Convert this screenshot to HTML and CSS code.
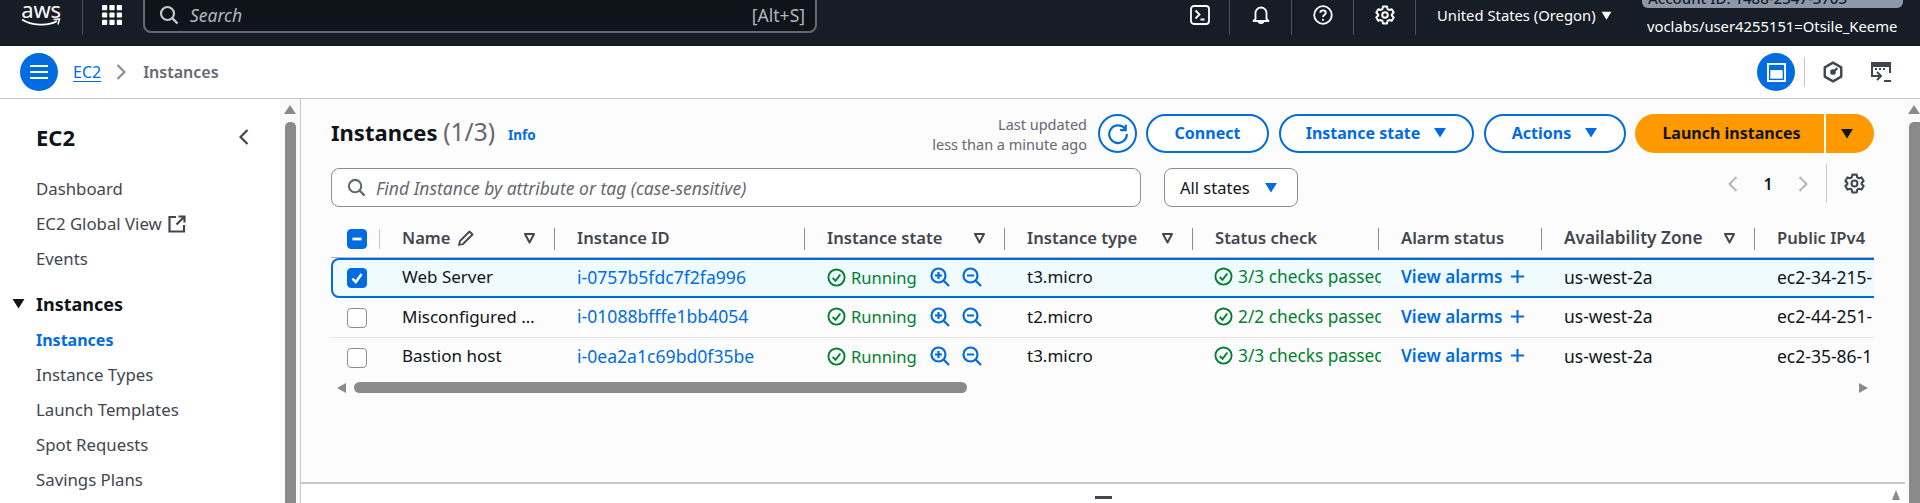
FILE: index.html
```html
<!DOCTYPE html>
<html lang="en">
<head>
<meta charset="utf-8">
<title>Instances | EC2</title>
<link rel="stylesheet" href="styles.css">
</head>
<body>
<svg class="defs" aria-hidden="true">
  <symbol id="i-search" viewBox="0 0 20 20"><circle cx="8.5" cy="8.5" r="6.5" fill="none" stroke="currentColor" stroke-width="2.2"/><path d="M13.2 13.2 18.5 18.5" stroke="currentColor" stroke-width="2.4" fill="none"/></symbol>
  <symbol id="i-gear" viewBox="0 0 20 20"><path d="M8 1.500h4l.6 2.600 1.600.9 2.500-.8 2 3.400-1.900 1.800v1.200l1.900 1.800-2 3.400-2.500-.8-1.600.9-.6 2.600H8l-.6-2.600-1.600-.9-2.500.8-2-3.400 1.900-1.800V9.400L1.300 7.600l2-3.400 2.500.8 1.600-.9z" fill="none" stroke="currentColor" stroke-width="2" stroke-linejoin="round"/><circle cx="10" cy="10" r="2.800" fill="none" stroke="currentColor" stroke-width="2"/></symbol>
  <symbol id="i-check" viewBox="0 0 20 20"><circle cx="10" cy="10" r="8.500" fill="none" stroke="currentColor" stroke-width="2"/><path d="M6 10.500 9 13.500 14 6.800" fill="none" stroke="currentColor" stroke-width="2"/></symbol>
  <symbol id="i-zoomin" viewBox="0 0 20 20"><circle cx="8.500" cy="8.500" r="7" fill="none" stroke="currentColor" stroke-width="2.200"/><path d="M13.500 13.500 19 19M8.500 5v7M5 8.500h7" fill="none" stroke="currentColor" stroke-width="2.200"/></symbol>
  <symbol id="i-zoomout" viewBox="0 0 20 20"><circle cx="8.500" cy="8.500" r="7" fill="none" stroke="currentColor" stroke-width="2.200"/><path d="M13.500 13.500 19 19M5 8.500h7" fill="none" stroke="currentColor" stroke-width="2.200"/></symbol>
  <symbol id="i-filter" viewBox="0 0 12 12"><path d="M1.500 2h9L6 10.500z" fill="none" stroke="currentColor" stroke-width="2" stroke-linejoin="round"/></symbol>
  <symbol id="i-caret" viewBox="0 0 14 12"><path d="M0.500 1h13L7 11.500z" fill="currentColor"/></symbol>
  <symbol id="i-plus" viewBox="0 0 16 16"><path d="M8 1v14M1 8h14" fill="none" stroke="currentColor" stroke-width="2.200"/></symbol>
</svg>

<header class="topbar">
  <div class="aws-logo">
    <span class="aws-word">aws</span>
    <svg class="aws-smile" viewBox="0 0 40 9"><path d="M1 1.500C10 7.500 27 8.500 36 3" fill="none" stroke="#fff" stroke-width="1.800"/><path d="M32.500 1.500 38.500 1 37 6.500" fill="none" stroke="#fff" stroke-width="1.500"/></svg>
  </div>
  <span class="top-div"></span>
  <svg class="apps" viewBox="0 0 20 20" fill="#fff"><rect x="0" y="0" width="5.200" height="5.200" rx=".8"/><rect x="7.400" y="0" width="5.200" height="5.200" rx=".8"/><rect x="14.800" y="0" width="5.200" height="5.200" rx=".8"/><rect x="0" y="7.400" width="5.200" height="5.200" rx=".8"/><rect x="7.400" y="7.400" width="5.200" height="5.200" rx=".8"/><rect x="14.800" y="7.400" width="5.200" height="5.200" rx=".8"/><rect x="0" y="14.800" width="5.200" height="5.200" rx=".8"/><rect x="7.400" y="14.800" width="5.200" height="5.200" rx=".8"/><rect x="14.800" y="14.800" width="5.200" height="5.200" rx=".8"/></svg>
  <div class="global-search">
    <svg class="gs-icon"><use href="#i-search"/></svg>
    <span class="gs-text">Search</span>
    <span class="gs-key">[Alt+S]</span>
  </div>
  <div class="top-tools">
    <span class="tool"><svg class="tool-icon" viewBox="0 0 20 20"><rect x="1" y="1" width="18" height="18" rx="3" fill="none" stroke="#fff" stroke-width="1.800"/><path d="M5.500 5.500 9.500 9.500 5.500 13.500M10.500 14.500h4" fill="none" stroke="#fff" stroke-width="1.800"/></svg></span>
    <span class="tool"><svg class="tool-icon" viewBox="0 0 20 20"><path d="M4.500 14V8a5.500 5.500 0 0 1 11 0v6l2 2h-15zM7.500 16.500c.4 2 4.600 2 5 0" fill="none" stroke="#fff" stroke-width="1.800" stroke-linejoin="round"/></svg></span>
    <span class="tool"><svg class="tool-icon" viewBox="0 0 20 20"><circle cx="10" cy="10" r="8.800" fill="none" stroke="#fff" stroke-width="1.800"/><path d="M7.300 7.700C7.300 4.500 12.800 4.500 12.800 7.700 12.800 9.700 10 9.700 10 12" fill="none" stroke="#fff" stroke-width="1.800"/><circle cx="10" cy="14.800" r="1.100" fill="#fff"/></svg></span>
    <span class="tool tool-last"><svg class="tool-icon"><use href="#i-gear"/></svg></span>
  </div>
  <div class="region">United States (Oregon) <svg class="region-caret"><use href="#i-caret"/></svg></div>
  <div class="account">
    <div class="account-pill"><span>Account ID: 1488-2347-3703</span></div>
    <div class="account-user">voclabs/user4255151=Otsile_Keeme</div>
  </div>
</header>

<nav class="crumbbar">
  <button class="round-btn" aria-label="Menu"><svg class="burger" viewBox="0 0 20 16"><path d="M1 2h18M1 8h18M1 14h18" stroke="#fff" stroke-width="2.200"/></svg></button>
  <a class="crumb-link">EC2</a>
  <svg class="crumb-sep" viewBox="0 0 10 16"><path d="M1.500 1 8.500 8 1.500 15" fill="none" stroke="#8c8c94" stroke-width="2.200"/></svg>
  <span class="crumb-current">Instances</span>
  <div class="crumb-tools">
    <button class="round-btn" aria-label="Panel"><svg class="panel-icon" viewBox="0 0 20 20"><rect x="1" y="1" width="18" height="18" fill="none" stroke="#fff" stroke-width="2"/><rect x="3.500" y="7.500" width="13" height="9" fill="#fff"/></svg></button>
    <span class="crumb-div"></span>
    <svg class="crumb-icon" viewBox="0 0 20 20"><path d="M10 1.500 17.500 5.800v8.400L10 18.500 2.500 14.200V5.800z" fill="none" stroke="#424650" stroke-width="2.200" stroke-linejoin="round"/><circle cx="10" cy="10" r="2.600" fill="#424650"/><path d="M10 10 14 6.500" stroke="#424650" stroke-width="2"/></svg>
    <svg class="crumb-icon crumb-icon-last" viewBox="0 0 22 22"><path d="M7 15H2V2h18v10" fill="none" stroke="#424650" stroke-width="2"/><path d="M2 3h18v3H2z" fill="#424650"/><path d="M5 8h2M9 8h2M13 8h2" stroke="#424650" stroke-width="2"/><path d="M7 11l4 4-4 4M5 15h5M14 20h7" fill="none" stroke="#424650" stroke-width="2"/></svg>
  </div>
</nav>

<div class="shell">
  <aside class="sidebar">
    <div class="side-nav">
      <div class="side-head"><span class="side-title">EC2</span><svg class="side-collapse" viewBox="0 0 10 16"><path d="M8.500 1 1.500 8 8.500 15" fill="none" stroke="#424650" stroke-width="2.200"/></svg></div>
      <a class="side-item">Dashboard</a>
      <a class="side-item">EC2 Global View <svg class="ext" viewBox="0 0 18 18"><path d="M8 2H1.500v14.500H16V10M10.500 1.500H16.500V7.500M16 2 8.500 9.500" fill="none" stroke="#424650" stroke-width="2.200"/></svg></a>
      <a class="side-item">Events</a>
      <div class="side-group"><svg class="side-caret"><use href="#i-caret"/></svg>Instances</div>
      <a class="side-item side-active">Instances</a>
      <a class="side-item">Instance Types</a>
      <a class="side-item">Launch Templates</a>
      <a class="side-item">Spot Requests</a>
      <a class="side-item">Savings Plans</a>
    </div>
    <div class="vscroll"><span class="arrow-up"></span><span class="vthumb"></span></div>
  </aside>

  <main class="main">
    <div class="content">
      <section class="head-row">
        <h1 class="title">Instances <span class="count">(1/3)</span></h1>
        <a class="info">Info</a>
        <div class="updated"><span>Last updated</span><span>less than a minute ago</span></div>
        <button class="refresh" aria-label="Refresh"><svg class="refresh-icon" viewBox="0 0 20 20"><path d="M16.500 5.500A8 8 0 1 0 18 10" fill="none" stroke="#006ce0" stroke-width="2"/><path d="M12 6.500h5v-5" fill="none" stroke="#006ce0" stroke-width="2"/></svg></button>
        <button class="btn btn-connect">Connect</button>
        <button class="btn btn-state">Instance state <svg class="caret"><use href="#i-caret"/></svg></button>
        <button class="btn btn-actions">Actions <svg class="caret"><use href="#i-caret"/></svg></button>
        <div class="launch"><button class="launch-main">Launch instances</button><button class="launch-drop" aria-label="More"><svg class="caret"><use href="#i-caret"/></svg></button></div>
      </section>

      <section class="filter-row">
        <div class="find"><svg class="find-icon"><use href="#i-search"/></svg><span>Find Instance by attribute or tag (case-sensitive)</span></div>
        <div class="states">All states <svg class="caret"><use href="#i-caret"/></svg></div>
        <div class="pager">
          <svg class="pg-arrow" viewBox="0 0 10 16"><path d="M8.500 1 1.500 8 8.500 15" fill="none" stroke="#b4b4bb" stroke-width="2"/></svg>
          <span class="pg-num">1</span>
          <svg class="pg-arrow" viewBox="0 0 10 16"><path d="M1.500 1 8.500 8 1.500 15" fill="none" stroke="#b4b4bb" stroke-width="2"/></svg>
          <span class="pg-div"></span>
          <svg class="pg-gear"><use href="#i-gear"/></svg>
        </div>
      </section>

      <section class="table">
        <div class="row row-head">
          <div class="cell cell-check"><span class="box box-on"><svg class="box-mark" viewBox="0 0 14 14"><path d="M3 7h8" stroke="#fff" stroke-width="2.400"/></svg></span><span class="first-div"></span></div>
          <div class="cell th">Name <svg class="pencil" viewBox="0 0 18 18"><path d="M3 12 12.500 2.500l3 3L6 15l-4 1z" fill="none" stroke="#424650" stroke-width="1.800" stroke-linejoin="round"/></svg><svg class="filter"><use href="#i-filter"/></svg></div>
          <div class="cell th">Instance ID</div>
          <div class="cell th">Instance state<svg class="filter"><use href="#i-filter"/></svg></div>
          <div class="cell th">Instance type<svg class="filter"><use href="#i-filter"/></svg></div>
          <div class="cell th">Status check</div>
          <div class="cell th">Alarm status</div>
          <div class="cell th th-wide">Availability Zone<svg class="filter"><use href="#i-filter"/></svg></div>
          <div class="cell th th-last">Public IPv4</div>
        </div>

        <div class="row row-selected">
          <div class="cell cell-check"><span class="box box-on"><svg class="box-mark" viewBox="0 0 14 14"><path d="M3 7.500 6 10.500 11 3.500" fill="none" stroke="#fff" stroke-width="2.200"/></svg></span></div>
          <div class="cell">Web Server</div>
          <div class="cell"><a class="id-link">i-0757b5fdc7f2fa996</a></div>
          <div class="cell state"><svg class="ok"><use href="#i-check"/></svg><span class="ok-text">Running</span><svg class="zoomi"><use href="#i-zoomin"/></svg><svg class="zoomi"><use href="#i-zoomout"/></svg></div>
          <div class="cell">t3.micro</div>
          <div class="cell status"><svg class="ok"><use href="#i-check"/></svg><span class="ok-text">3/3 checks passed</span></div>
          <div class="cell"><a class="alarm">View alarms</a><svg class="plus"><use href="#i-plus"/></svg></div>
          <div class="cell zone">us-west-2a</div>
          <div class="cell dns">ec2-34-215-</div>
        </div>

        <div class="row row-line">
          <div class="cell cell-check"><span class="box"></span></div>
          <div class="cell">Misconfigured …</div>
          <div class="cell"><a class="id-link">i-01088bfffe1bb4054</a></div>
          <div class="cell state"><svg class="ok"><use href="#i-check"/></svg><span class="ok-text">Running</span><svg class="zoomi"><use href="#i-zoomin"/></svg><svg class="zoomi"><use href="#i-zoomout"/></svg></div>
          <div class="cell">t2.micro</div>
          <div class="cell status"><svg class="ok"><use href="#i-check"/></svg><span class="ok-text">2/2 checks passed</span></div>
          <div class="cell"><a class="alarm">View alarms</a><svg class="plus"><use href="#i-plus"/></svg></div>
          <div class="cell zone">us-west-2a</div>
          <div class="cell dns">ec2-44-251-</div>
        </div>

        <div class="row row-last">
          <div class="cell cell-check"><span class="box"></span></div>
          <div class="cell">Bastion host</div>
          <div class="cell"><a class="id-link">i-0ea2a1c69bd0f35be</a></div>
          <div class="cell state"><svg class="ok"><use href="#i-check"/></svg><span class="ok-text">Running</span><svg class="zoomi"><use href="#i-zoomin"/></svg><svg class="zoomi"><use href="#i-zoomout"/></svg></div>
          <div class="cell">t3.micro</div>
          <div class="cell status"><svg class="ok"><use href="#i-check"/></svg><span class="ok-text">3/3 checks passed</span></div>
          <div class="cell"><a class="alarm">View alarms</a><svg class="plus"><use href="#i-plus"/></svg></div>
          <div class="cell zone">us-west-2a</div>
          <div class="cell dns">ec2-35-86-1</div>
        </div>
      </section>

      <div class="hscroll"><span class="arrow-left"></span><span class="hthumb"></span><span class="arrow-right"></span></div>
    </div>
    <div class="split-panel"><span class="handle"></span><span class="split-arrow"></span></div>
  </main>

  <div class="page-scroll"><span class="arrow-up"></span><span class="vthumb"></span></div>
</div>
</body>
</html>
```

FILE: styles.css
```css
* { box-sizing: border-box; }
html, body { margin: 0; height: 503px; overflow: hidden; }
body { font-family: "Noto Sans", sans-serif; font-size: 16px; color: #0f141a; background: #fff; }
.defs { position: absolute; width: 0; height: 0; }
button { font: inherit; cursor: pointer; }

/* top bar */
.topbar { height: 46px; background: #161d26; color: #fff; display: flex; align-items: flex-start; overflow: hidden; }
.aws-logo { width: 40px; margin-left: 21px; display: flex; flex-direction: column; align-items: center; }
.aws-word { font-size: 22px; line-height: 18px; letter-spacing: -.3px; }
.aws-smile { width: 40px; height: 9px; }
.top-div { width: 1px; height: 35px; background: #4b525c; margin-left: 21px; }
.apps { width: 20px; height: 20px; margin: 5px 0 0 19px; }
.global-search { width: 674px; height: 43px; margin: -10px 0 0 21px; background: #0f141a; border: 2px solid #656871; border-radius: 8px; display: flex; align-items: center; padding: 6px 10px 0 14px; font-size: 17.500px; color: #b4b4bb; }
.gs-icon { width: 20px; height: 20px; color: #c6c6cd; }
.gs-text { font-style: italic; margin-left: 11px; }
.gs-key { margin-left: auto; }
.top-tools { display: flex; margin-left: 373px; }
.tool { width: 62px; height: 35px; display: flex; justify-content: center; padding-top: 5px; border-right: 1px solid #4b525c; }
.tool:first-child { width: 40px; justify-content: flex-start; }
.tool-icon { width: 20px; height: 20px; color: #fff; }
.region { margin-left: 21px; margin-top: 4px; font-size: 14.800px; line-height: 22px; white-space: nowrap; display: flex; align-items: center; }
.region-caret { width: 11px; height: 9px; margin-left: 5px; color: #fff; }
.account { margin-left: auto; margin-right: 17px; width: 261px; }
.account-pill { height: 24px; margin-top: -16px; background: #8d99a8; border-radius: 6px; color: #161d26; font-size: 15px; line-height: 28px; padding-left: 6px; white-space: nowrap; font-weight: 500; }
.account-user { font-size: 14.800px; line-height: 22px; margin-top: 7px; padding-left: 5px; white-space: nowrap; }

/* breadcrumbs */
.crumbbar { height: 53px; background: #fff; border-bottom: 1px solid #c6c6cd; display: flex; align-items: center; padding: 0 0 0 20px; }
.round-btn { width: 38px; height: 38px; padding: 0; border: 0; border-radius: 50%; background: #006ce0; display: flex; align-items: center; justify-content: center; }
.burger { width: 20px; height: 16px; }
.crumb-link { margin-left: 15px; color: #006ce0; text-decoration: underline; text-underline-offset: 3px; font-size: 16px; }
.crumb-sep { width: 10px; height: 16px; margin-left: 15px; }
.crumb-current { margin-left: 17px; color: #656871; font-size: 16px; font-weight: 600; }
.crumb-tools { margin-left: auto; display: flex; align-items: center; }
.panel-icon { width: 19px; height: 19px; }
.crumb-div { width: 1px; height: 30px; background: #c6c6cd; margin: 0 17px 0 9px; }
.crumb-icon { width: 22px; height: 22px; }
.crumb-icon-last { margin: 0 28px 0 26px; }

/* layout */
.shell { display: flex; height: 404px; }

/* sidebar */
.sidebar { width: 301px; flex: none; background: #fff; border-right: 1px solid #c6c6cd; display: flex; }
.side-nav { width: 280px; padding-top: 23px; flex: none; }
.side-head { height: 30px; display: flex; align-items: center; justify-content: space-between; padding: 0 31px 0 36px; margin-bottom: 19px; }
.side-title { font-size: 22px; font-weight: 700; line-height: 30px; }
.side-collapse { width: 10px; height: 16px; }
.side-item { height: 35px; padding-left: 36px; display: flex; align-items: center; color: #424650; font-size: 16.800px; white-space: nowrap; }
.ext { width: 18px; height: 18px; margin-left: 6px; }
.side-group { height: 35px; margin: 10px 0 1px; padding-left: 12px; display: flex; align-items: center; font-weight: 700; font-size: 18px; }
.side-caret { width: 13px; height: 11px; margin-right: 11px; }
.side-active { color: #006ce0; font-weight: 700; font-size: 16px; }
.vscroll { width: 20px; flex: none; background: #fafafa; display: flex; flex-direction: column; align-items: center; padding-top: 6px; }
.arrow-up { width: 0; height: 0; border: 6px solid transparent; border-top: 0; border-bottom: 9px solid #8a8a8a; flex: none; }
.vthumb { flex: 1; width: 11px; background: #8a8a8a; border-radius: 5px 5px 0 0; margin-top: 8px; }

/* main */
.main { flex: 1; min-width: 0; display: flex; flex-direction: column; background: #fcfcfc; }
.content { flex: 1; padding: 15px 0 0 30px; width: 1573px; }
.head-row { display: flex; align-items: center; height: 39px; }
.title { margin: 0 0 3px; font-size: 22px; font-weight: 700; line-height: 30px; white-space: nowrap; }
.count { font-weight: 400; color: #656871; font-size: 24.500px; }
.info { margin-left: 13px; color: #006ce0; font-size: 13.500px; font-weight: 700; padding-top: 3px; }
.updated { margin-left: auto; display: flex; flex-direction: column; align-items: flex-end; font-size: 14.500px; line-height: 20px; color: #656871; }
.refresh { width: 39px; height: 39px; padding: 0; margin-left: 11px; border: 2px solid #006ce0; border-radius: 50%; background: #fff; display: flex; align-items: center; justify-content: center; }
.refresh-icon { width: 22px; height: 22px; }
.btn { height: 39px; padding: 0 0 2px; margin-left: 10px; background: #fff; border: 2px solid #006ce0; border-radius: 20px; color: #006ce0; font-weight: 700; font-size: 16px; display: flex; align-items: center; justify-content: center; white-space: nowrap; }
.btn-connect { width: 123px; margin-left: 9px; }
.btn-state { width: 195px; }
.btn-actions { width: 142px; }
.caret { width: 14px; height: 11px; margin-left: 13px; color: #006ce0; }
.launch { display: flex; margin-left: 9px; height: 39px; }
.launch-main { width: 189px; border: 0; padding: 0 0 2px 4px; background: #ff9900; border-radius: 20px 0 0 20px; font-weight: 700; color: #0f141a; font-size: 16px; }
.launch-drop { width: 48px; margin-left: 2px; border: 0; padding: 0 6px 0 0; background: #ff9900; border-radius: 0 20px 20px 0; display: flex; align-items: center; justify-content: center; }
.launch-drop .caret { color: #0f141a; margin-left: 0; }

.filter-row { display: flex; margin-top: 15px; height: 39px; width: 1543px; }
.find { width: 810px; height: 39px; border: 1px solid #8c8c94; border-radius: 8px; background: #fff; display: flex; align-items: center; padding-left: 15px; font-style: italic; color: #656871; font-size: 17.500px; }
.find-icon { width: 19px; height: 19px; margin-right: 10px; color: #656871; flex: none; }
.states { width: 134px; height: 39px; margin-left: 23px; border: 1px solid #8c8c94; border-radius: 8px; background: #fff; display: flex; align-items: center; padding-left: 15px; font-size: 16.500px; }
.states .caret { margin-left: 14px; }
.pager { margin-left: auto; margin-top: -4px; height: 39px; display: flex; align-items: center; }
.pg-arrow { width: 10px; height: 18px; }
.pg-num { width: 60px; text-align: center; font-weight: 600; font-size: 16px; }
.pg-div { width: 1px; height: 39px; background: #c6c6cd; margin-left: 18px; }
.pg-gear { width: 21px; height: 21px; margin: 0 9px 0 17px; color: #424650; }

/* table */
.table { width: 1543px; margin-top: 13px; overflow: hidden; font-size: 17px; }
.row { display: grid; grid-template-columns: 49px 175px 250px 200px 188px 186px 163px 213px 200px; width: 1624px; height: 39px; align-items: center; }
.row-head { height: 38px; border-bottom: 1px solid #b4b4bb; }
.row-selected { background: #f0fbff; box-shadow: inset 0 0 0 2px #006ce0; border-radius: 8px 0 0 8px; height: 40px; }
.row-line { height: 40px; border-bottom: 1px solid #e8e8ea; }
.cell { padding: 0 0 3px 22px; white-space: nowrap; overflow: hidden; display: flex; align-items: center; height: 100%; }
.row-last .cell { padding-bottom: 4px; }
.cell.state { padding-bottom: 2px; }
.row-last .cell.state { padding-bottom: 3px; }
.cell.cell-check { padding: 0 0 0 16px; overflow: visible; }
.first-div { width: 1px; height: 20px; background: #c6c6cd; margin-left: 12px; }
.box { width: 20px; height: 20px; border: 1px solid #8c8c94; border-radius: 4px; background: #fff; display: flex; align-items: center; justify-content: center; flex: none; }
.box-on { background: #006ce0; border-color: #006ce0; }
.box-mark { width: 16px; height: 16px; }
.th { font-weight: 600; font-size: 16.600px; color: #424650; padding: 0 16px 2px 22px; height: 22px; border-right: 1px solid #8c8c94; overflow: visible; line-height: 18px; }
.th-wide { font-size: 17.200px; }
.th-last { border-right: 0; }
.pencil { width: 18px; height: 18px; margin-left: 6px; }
.filter { width: 13px; height: 12px; margin-left: auto; color: #424650; margin-right: 2px; }
.id-link { color: #006ce0; font-size: 17.600px; }
.ok { width: 19px; height: 19px; color: #00802f; flex: none; margin-right: 5px; }
.ok-text { color: #00802f; font-size: 16.600px; }
.status .ok-text { font-size: 17.300px; }
.cell.status { padding-left: 21px; margin-right: -2px; }
.state .zoomi { width: 20px; height: 20px; color: #006ce0; margin-left: 12px; flex: none; }
.state .ok-text + .zoomi { margin-left: 13px; }
.alarm { color: #006ce0; font-weight: 600; font-size: 17.200px; }
.plus { width: 15px; height: 15px; color: #006ce0; margin-left: 7px; }
.zone, .dns { font-size: 17.500px; }

.hscroll { display: flex; align-items: center; height: 11px; margin-top: 5px; padding-left: 6px; width: 1543px; }
.hthumb { width: 613px; height: 11px; background: #8a8a8a; border-radius: 6px; margin-left: 8px; }
.arrow-left { width: 0; height: 0; border: 5px solid transparent; border-left: 0; border-right: 9px solid #8a8a8a; }
.arrow-right { width: 0; height: 0; border: 5px solid transparent; border-right: 0; border-left: 9px solid #8a8a8a; margin-left: auto; margin-right: 6px; }

.split-panel { height: 21px; flex: none; background: #fff; border-top: 2px solid #c6c6cd; display: flex; justify-content: center; align-items: center; position: relative; }
.handle { width: 17px; height: 3px; background: #424650; margin-top: 8px; }
.split-arrow { position: absolute; right: 5px; top: 6px; width: 0; height: 0; border: 4px solid transparent; border-top: 0; border-bottom: 10px solid #8a8a8a; }

.page-scroll { width: 15px; flex: none; background: #fafafa; display: flex; flex-direction: column; align-items: flex-end; padding-top: 6px; }
.page-scroll .vthumb { border-radius: 5px 0 0 0; width: 11px; }
```
